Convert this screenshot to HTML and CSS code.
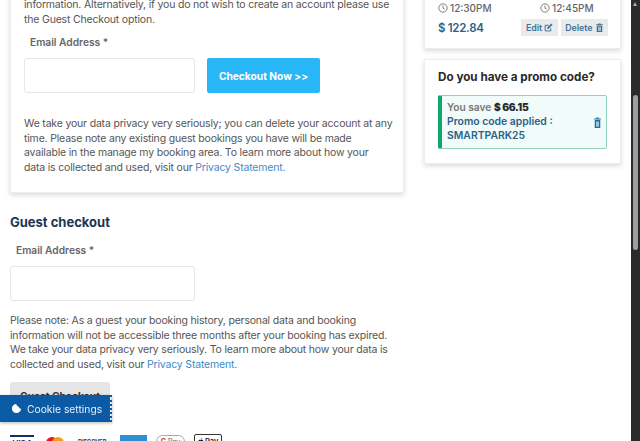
FILE: index.html
```html
<!DOCTYPE html>
<html lang="en">
<head>
  <meta charset="UTF-8">
  <meta name="viewport" content="width=device-width, initial-scale=1.0">
  <title>Checkout</title>
  <link rel="stylesheet" href="styles.css">
</head>
<body>
  <div class="page">
    <div class="columns">
      <main class="left">
        <section class="card account">
          <p class="copy">information. Alternatively, if you do not wish to create an account please use the Guest Checkout option.</p>
          <label class="field-label" for="account-email">Email Address *</label>
          <div class="checkout-row">
            <input class="text-input" id="account-email" type="text">
            <button class="btn-now">Checkout Now &gt;&gt;</button>
          </div>
          <p class="copy">We take your data privacy very seriously; you can delete your account at any time. Please note any existing guest bookings you have will be made available in the manage my booking area. To learn more about how your<br>data is collected and used, visit our <a href="#">Privacy Statement.</a></p>
        </section>

        <section class="guest">
          <h2>Guest checkout</h2>
          <label class="field-label" for="guest-email">Email Address *</label>
          <input class="text-input guest-input" id="guest-email" type="text">
          <p class="copy">Please note: As a guest your booking history, personal data and booking information will not be accessible three months after your booking has expired. We take your data privacy very seriously. To learn more about how your data is collected and used, visit our <a href="#">Privacy Statement.</a></p>
          <button class="btn-guest">Guest Checkout</button>
        </section>

        <div class="payments">
          <svg class="pay-visa" width="24" height="20" viewBox="0 0 24 20"><rect width="24" height="2" fill="#1a2a6c"/><text x="12" y="10.500" font-family="Liberation Sans" font-size="8.500" font-weight="700" font-style="italic" text-anchor="middle" fill="#1a2a6c">VISA</text></svg>
          <svg class="pay-master" width="18" height="20" viewBox="0 0 18 20"><circle cx="6" cy="8" r="6" fill="#e3132c"/><circle cx="12" cy="8" r="6" fill="#f79e1b"/></svg>
          <span class="pay-discover">DISCOVER</span>
          <svg class="pay-amex" width="27" height="20" viewBox="0 0 27 20"><rect width="27" height="20" fill="#2f8fd0"/></svg>
          <span class="pay-pill"><b>G</b> Pay</span>
          <span class="pay-box">
            <svg class="apple" viewBox="0 0 10 12"><path d="M7 0C7 1.500 6 2.600 4.800 2.700 4.700 1.400 5.800.2 7 0zM5 3.400c.6 0 1.200-.5 2.100-.5.800 0 1.600.4 2.100 1.100-1.800 1.100-1.500 3.500.4 4.300C9 9.700 8 11.500 6.900 11.500c-.7 0-1-.4-1.900-.4s-1.200.4-1.900.4C1.800 11.500.2 8.800.2 6.600.2 4.300 1.700 3 3.100 3c.8 0 1.400.4 1.900.4z" fill="#222"/></svg>Pay
          </span>
        </div>
      </main>

      <aside class="right">
        <section class="card summary">
          <div class="times">
            <span class="time">
              <svg class="clock" viewBox="0 0 12 12"><circle cx="6" cy="6" r="5" fill="none" stroke="currentColor"/><path d="M6 3v3.200l2 1.200" fill="none" stroke="currentColor"/></svg>
              12:30PM
            </span>
            <span class="time">
              <svg class="clock" viewBox="0 0 12 12"><circle cx="6" cy="6" r="5" fill="none" stroke="currentColor"/><path d="M6 3v3.200l2 1.200" fill="none" stroke="currentColor"/></svg>
              12:45PM
            </span>
          </div>
          <div class="price-row">
            <span class="price">$ 122.84</span>
            <div class="actions">
              <button class="btn-small">Edit
                <svg class="small-icon" viewBox="0 0 12 12"><path d="M9 7v3.500H1.500V3H6" fill="none" stroke="currentColor" stroke-width="1.300"/><path d="M4.500 5.800 9.800 .8l1.500 1.500-5 5.200-2 .4z" fill="currentColor"/></svg>
              </button>
              <button class="btn-small">Delete
                <svg class="small-icon" viewBox="0 0 12 12"><path d="M1.500 1.500h9v1.200h-9zM4.500.500h3v1h-3z" fill="currentColor"/><path d="M2.300 3.400h7.400V12H2.300zM4 5v5.500h.8V5zm1.600 0v5.500h.8V5zm1.600 0v5.500H8V5z" fill="currentColor" fill-rule="evenodd"/></svg>
              </button>
            </div>
          </div>
        </section>

        <section class="card promo">
          <h3>Do you have a promo code?</h3>
          <div class="promo-box">
            <div class="promo-text">
              <div class="promo-save">You save <b>$ 66.15</b></div>
              <div class="promo-code">Promo code applied : SMARTPARK25</div>
            </div>
            <svg class="promo-trash" viewBox="0 0 12 12" preserveAspectRatio="none"><path d="M1.500 1.500h9v1.200h-9zM4.500.500h3v1h-3z" fill="currentColor"/><path d="M2.300 3.400h7.400V12H2.300zM4 5v5.500h.8V5zm1.600 0v5.500h.8V5zm1.600 0v5.500H8V5z" fill="currentColor" fill-rule="evenodd"/></svg>
          </div>
        </section>
      </aside>
    </div>
  </div>

  <div class="scrollbar">
    <span class="scroll-arrow"></span>
    <span class="scroll-thumb"></span>
  </div>

  <div class="cookie-tab">
    <svg class="cookie-icon" viewBox="0 0 12 12"><path d="M6 1a5 5 0 1 0 5 5.200A2.500 2.500 0 0 1 8.500 4 2.500 2.500 0 0 1 6 1z" fill="#fff"/></svg>
    Cookie settings
  </div>
</body>
</html>
```

FILE: styles.css
```css
html, body {
  margin: 0;
  padding: 0;
  height: 100%;
  overflow: hidden;
  background: #fff;
}
body {
  font-family: "Inter", "Open Sans", sans-serif;
  font-size: 10.500px;
  color: #555;
}
.page {
  margin-top: -24px;
  padding: 0 19px 0 10px;
}
.columns {
  display: flex;
  gap: 20px;
}
.left {
  width: 394px;
}
.right {
  width: 197px;
}
.card {
  background: #fff;
  box-sizing: border-box;
  border: 1px solid #eee;
  box-shadow: 0 2px 5px rgba(0, 0, 0, 0.15);
}
.account {
  padding: 21px 7px 0 13px;
  height: 217px;
}
.copy {
  margin: 0;
  font-size: 10.500px;
  line-height: 14.500px;
  letter-spacing: -0.180px;
}
.copy a {
  color: #3f8ac6;
  text-decoration: none;
}
.field-label {
  display: block;
  font-size: 10.200px;
  font-weight: 600;
  color: #666;
  margin: 9px 0 10px 6px;
}
.checkout-row {
  display: flex;
  gap: 12px;
  margin-bottom: 24px;
}
.text-input {
  display: block;
  box-sizing: border-box;
  width: 171px;
  height: 35px;
  margin: 0;
  background: #fff;
  border: 1px solid #e6e6e6;
  border-radius: 3px;
}
.guest-input {
  width: 185px;
}
.btn-now {
  width: 113px;
  height: 35px;
  border: 0;
  border-radius: 2px;
  background: #29b6f6;
  color: #fff;
  font: 700 10.200px "Inter", sans-serif;
}
.guest {
  margin-top: 21px;
}
.guest h2 {
  margin: 0;
  font-size: 13px;
  line-height: 16px;
  font-weight: 700;
  color: #1c3557;
}
.guest .field-label {
  margin: 14px 0 10px 6px;
}
.guest .copy {
  margin-top: 13px;
}
.btn-guest {
  display: block;
  width: 100px;
  height: 28px;
  margin-top: 10px;
  border: 0;
  border-radius: 2px 2px 0 0;
  background: #e6e6e6;
  color: #333;
  font: 700 10.200px "Inter", sans-serif;
}
.payments {
  display: flex;
  align-items: flex-start;
  height: 20px;
  margin-top: 25px;
}
.pay-master {
  margin-left: 12px;
}
.pay-discover {
  width: 30px;
  margin: 4px 0 0 14px;
  font-size: 5.500px;
  font-weight: 700;
  color: #333;
}
.pay-amex {
  margin-left: 12px;
}
.pay-pill {
  width: 29px;
  box-sizing: border-box;
  margin-left: 9px;
  padding: 1px 0;
  border: 1px solid #aaa;
  border-radius: 9px;
  font-size: 7px;
  text-align: center;
}
.pay-pill b {
  color: #d8392b;
}
.pay-box {
  display: flex;
  align-items: center;
  gap: 1px;
  margin: -1px 0 0 9px;
  padding: 2px 3px;
  border: 1px solid #333;
  border-radius: 2px;
  font-size: 7.500px;
  font-weight: 600;
  color: #222;
}
.apple {
  width: 6px;
  height: 7px;
}
.summary {
  height: 73px;
  padding: 24px 13px 0;
}
.times {
  display: flex;
}
.time {
  display: flex;
  flex: none;
  align-items: center;
  gap: 2px;
  width: 102px;
  font-size: 10px;
  font-weight: 500;
  line-height: 14px;
  color: #666;
}
.clock {
  width: 10px;
  height: 10px;
}
.price-row {
  display: flex;
  justify-content: space-between;
  align-items: center;
  margin: 4px -1px 0 0;
}
.price {
  font-size: 11.500px;
  font-weight: 600;
  letter-spacing: -0.300px;
  color: #2d6287;
}
.actions {
  display: flex;
  gap: 3px;
}
.btn-small {
  display: flex;
  align-items: center;
  gap: 2px;
  height: 17px;
  padding: 0 4.500px;
  border: 0;
  background: #eaeaea;
  color: #3f7398;
  font: 600 8.800px "Inter", sans-serif;
}
.small-icon {
  width: 9px;
  height: 9px;
}
.promo {
  margin-top: 10px;
  height: 105px;
  padding: 10px 13px 0;
}
.promo h3 {
  margin: 0 0 10px;
  font-size: 11.700px;
  line-height: 15px;
  font-weight: 700;
  color: #2a2a2a;
}
.promo-box {
  display: flex;
  align-items: center;
  justify-content: space-between;
  box-sizing: border-box;
  height: 54px;
  padding: 0 4px 0 5px;
  background: #f0fbfa;
  border: 1px solid #8fd0bf;
  border-left: 4px solid #12a66f;
  border-radius: 2px;
}
.promo-text {
  width: 125px;
  line-height: 14.500px;
  font-size: 10.400px;
  font-weight: 600;
}
.promo-save {
  color: #777;
  font-size: 10.200px;
}
.promo-save b {
  color: #2a2a2a;
  letter-spacing: -0.300px;
}
.promo-code {
  color: #2d6287;
}
.promo-trash {
  width: 9px;
  height: 11px;
  color: #1f6ea3;
}
.scrollbar {
  position: fixed;
  top: 0;
  right: 0;
  bottom: 0;
  width: 9px;
  background: #2b2b2b;
}
.scroll-arrow {
  position: absolute;
  top: 2px;
  left: 2px;
  border: 2.500px solid transparent;
  border-top: 0;
  border-bottom: 4px solid #aaa;
}
.scroll-thumb {
  position: absolute;
  top: 95px;
  left: 2px;
  width: 5px;
  height: 155px;
  border-radius: 3px;
  background: #9e9e9e;
}
.cookie-tab {
  position: fixed;
  left: 0;
  top: 395px;
  display: flex;
  align-items: center;
  gap: 5px;
  box-sizing: border-box;
  width: 112px;
  height: 27px;
  padding-left: 11px;
  background: #0b5aa5;
  background-clip: padding-box;
  border-right: 2px dotted #0b5aa5;
  box-shadow: 0 1px 3px rgba(0, 0, 0, 0.3);
  color: #e6eef7;
  font-size: 10.300px;
}
.cookie-icon {
  width: 11px;
  height: 11px;
}
```
